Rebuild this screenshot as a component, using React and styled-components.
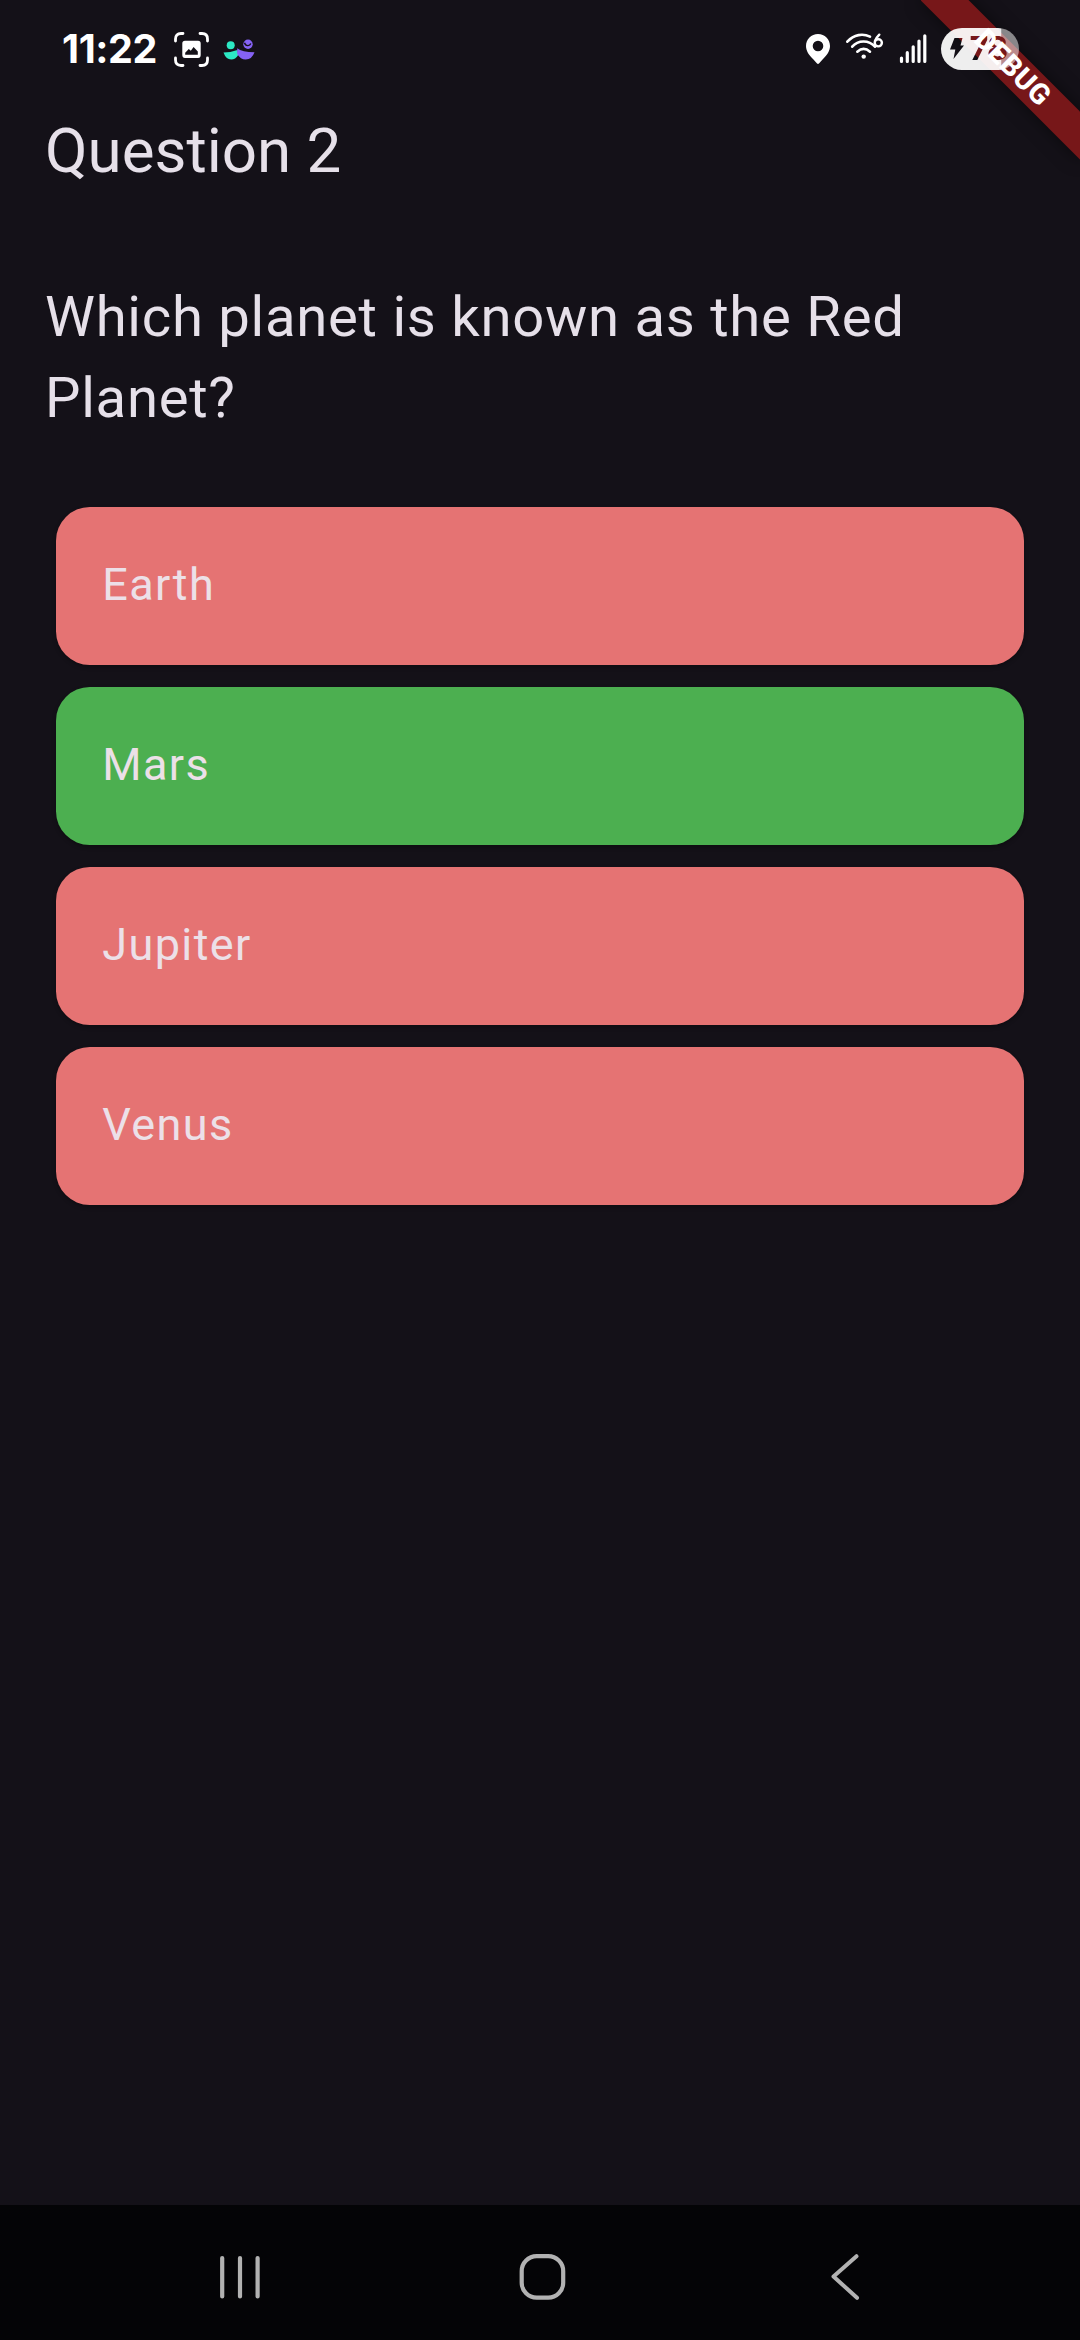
import React from "react";
import styled, { createGlobalStyle } from "styled-components";

const GlobalStyle = createGlobalStyle`
  html, body { margin: 0; padding: 0; background: #141118; }
  * { box-sizing: border-box; }
`;

const Screen = styled.div`
  position: relative;
  display: flex;
  flex-direction: column;
  width: 1080px;
  height: 2340px;
  overflow: hidden;
  background: #141118;
  color: #e6e0e9;
  font-family: Roboto, "Noto Sans", sans-serif;
`;

const StatusBar = styled.header`
  position: relative;
  z-index: 2;
  display: flex;
  justify-content: space-between;
  height: 98px;
  padding: 0 61px 0 62px;
  flex-shrink: 0;
`;

const StatusGroup = styled.div`
  display: flex;
  align-items: center;
  height: 98px;
`;

const Clock = styled.time`
  width: 112px;
  color: #fff;
  font: 700 39.5px/48px Inter, sans-serif;
  letter-spacing: -0.4px;
  white-space: nowrap;
`;

const Glyph = styled.svg`
  display: block;
  flex-shrink: 0;
  overflow: visible;
  margin-left: ${(p) => p.$gap || 0}px;
`;

const BannerClip = styled.div`
  position: absolute;
  z-index: 1;
  top: 0;
  right: 0;
  width: 220px;
  height: 220px;
  overflow: hidden;
`;

const Banner = styled.div`
  position: absolute;
  top: 50.7px;
  left: 40px;
  width: 225px;
  height: 33.75px;
  transform: rotate(45deg);
  background: #771719;
  box-shadow: 0 0 17px rgba(0, 0, 0, 0.5);
  color: #fff;
  font-size: 28.7px;
  font-weight: 800;
  letter-spacing: 0.5px;
  line-height: 33.75px;
  text-align: center;
`;

const AppBar = styled.div`
  display: flex;
  align-items: center;
  height: 106px;
  padding: 0 45px;
  flex-shrink: 0;
`;

const Title = styled.h1`
  margin: 0;
  font-size: 61.875px;
  font-weight: 400;
  line-height: 78px;
`;

const Content = styled.main`
  flex: 1;
  padding: 72.5px 45px 0;
`;

const Question = styled.p`
  margin: 0 0 68.5px;
  font-size: 56.25px;
  line-height: 81px;
  letter-spacing: 0.72px;
`;

const Options = styled.div`
  display: flex;
  flex-direction: column;
  gap: 22.5px;
  padding: 0 11.25px;
`;

const Option = styled.button`
  display: flex;
  align-items: center;
  width: 100%;
  height: 157.5px;
  padding: 0 46px 2.5px;
  border: 0;
  border-radius: 33.75px;
  background: ${(p) => (p.$correct ? "#4caf50" : "#e57373")};
  box-shadow: 0 2px 4px rgba(0, 0, 0, 0.3);
  color: #ece0e8;
  font: 400 45px/67px Roboto, sans-serif;
  letter-spacing: 1.406px;
`;

const NavBar = styled.nav`
  display: flex;
  justify-content: space-between;
  align-items: center;
  height: 135px;
  padding: 9px 211px 0 216px;
  background: #040406;
  flex-shrink: 0;
`;

const options = [
  { label: "Earth" },
  { label: "Mars", correct: true },
  { label: "Jupiter" },
  { label: "Venus" },
];

const CaptureIcon = () => (
  <Glyph width="36" height="34" viewBox="0 0 36 34">
    <path d="M1.5 9V7Q1.5 1.5 7 1.5H9M26 1.5h2Q33.5 1.5 33.5 7v2M33.5 26v2Q33.5 33.5 28 33.5h-2M9 33.5H7Q1.5 33.5 1.5 28v-2" fill="none" stroke="#fff" strokeWidth="2.8" strokeLinecap="round" />
    <path fillRule="evenodd" fill="#fff" d="M11 8.7H24Q26.7 8.7 26.7 11.5V23Q26.7 26 24 26H11Q8.3 26 8.3 23V11.5Q8.3 8.7 11 8.7ZM11.2 22.7H23.8V19.6L19.6 15L16.8 18.8L14.8 17L11.2 20.8Z" />
  </Glyph>
);

const PeopleIcon = () => (
  <Glyph $gap={13} width="32" height="21" viewBox="0 0 32 21">
    <circle cx="7.7" cy="6.2" r="4" fill="#2ce8c4" />
    <path d="M.5 13.5Q7 13.5 14.5 11L15.2 16Q12.5 20.5 8.2 20.5Q3 20.5 .5 13.5Z" fill="#2ce8c4" />
    <circle cx="25" cy="5.3" r="4.7" fill="#8562f4" />
    <path d="M21.5 3.8Q22.4 6.8 25 6.6Q27 6.6 27.8 4.6" fill="none" stroke="#141118" strokeWidth="1.4" />
    <path d="M14.2 9.2Q19 13 31.5 13.3Q29 20.5 22.7 20.5Q17.5 20.5 14.2 15Z" fill="#8562f4" />
  </Glyph>
);

const PinIcon = () => (
  <Glyph width="24" height="31" viewBox="0 0 24 31">
    <path fillRule="evenodd" fill="#fff" d="M12 0C5.2 0 0 5 0 12C0 17 3 21 7 25L10.8 29.2Q12 30.6 13.2 29.2L17 25C21 21 24 17 24 12C24 5 18.8 0 12 0ZM12 6.7a5.3 5.3 0 1 1 0 10.6a5.3 5.3 0 0 1 0-10.6Z" />
  </Glyph>
);

const WifiIcon = () => (
  <Glyph $gap={15} width="38" height="32" viewBox="0 0 38 32">
    <g fill="none" stroke="#fff" strokeWidth="2.6" strokeLinecap="round">
      <path d="M2.3 8.7C9 1.3 18 .3 25 3.7M7.2 13.7C13 6.7 24 6.7 30 13.7M12.3 18.7Q18.7 13 25 18.7" />
    </g>
    <circle cx="18.7" cy="23.6" r="2.2" fill="#fff" />
    <path d="M34.3 1.7Q31 5 30 8" fill="none" stroke="#fff" strokeWidth="2.4" strokeLinecap="round" />
    <circle cx="33.3" cy="9.8" r="3.6" fill="none" stroke="#fff" strokeWidth="2.4" />
  </Glyph>
);

const SignalIcon = () => (
  <Glyph $gap={16} width="28" height="30" viewBox="0 0 28 30">
    <path d="M2.5 24v3.500M8.3 18.700v8.800M14.2 12.800v14.700M20 7v20.500M25.8 1.800v25.700" fill="none" stroke="#fff" strokeWidth="3.2" strokeLinecap="round" />
  </Glyph>
);

const Battery = () => (
  <Glyph $gap={14} width="78" height="42" viewBox="0 0 78 42">
    <defs>
      <mask id="charge">
        <rect width="78" height="42" rx="21" fill="#fff" />
        <path d="M13.5 10h8l-2 7.500h3.500L12.500 31l1.800-9.500H9Z" fill="#000" />
        <text x="28.5" y="32" fontFamily="Inter" fontSize="32.5" fontWeight="700" letterSpacing="-1">78</text>
      </mask>
    </defs>
    <g mask="url(#charge)">
      <rect width="60.5" height="42" fill="#fff" fillOpacity=".93" />
      <rect x="60.5" width="17.5" height="42" fill="#fff" fillOpacity=".5" />
    </g>
  </Glyph>
);

export default function App() {
  return (
    <Screen>
      <GlobalStyle />
      <StatusBar>
        <StatusGroup>
          <Clock>11:22</Clock>
          <CaptureIcon />
          <PeopleIcon />
        </StatusGroup>
        <StatusGroup>
          <PinIcon />
          <WifiIcon />
          <SignalIcon />
          <Battery />
        </StatusGroup>
      </StatusBar>
      <BannerClip>
        <Banner>DEBUG</Banner>
      </BannerClip>
      <AppBar>
        <Title>Question 2</Title>
      </AppBar>
      <Content>
        <Question>Which planet is known as the Red Planet?</Question>
        <Options>
          {options.map((o) => (
            <Option key={o.label} $correct={o.correct}>{o.label}</Option>
          ))}
        </Options>
      </Content>
      <NavBar>
        <Glyph width="48" height="48" viewBox="0 0 48 48">
          <path d="M6.2 5v38.500M24 5v38.500M41.6 5v38.500" stroke="#b2b2b2" strokeWidth="4.2" strokeLinecap="round" />
        </Glyph>
        <Glyph width="48" height="48" viewBox="0 0 48 48">
          <rect x="2.7" y="3.2" width="41.5" height="41.5" rx="15" fill="none" stroke="#b2b2b2" strokeWidth="4.2" />
        </Glyph>
        <Glyph width="48" height="48" viewBox="0 0 48 48">
          <path d="M35.5 3.200L12.500 23.500L36 44.800" fill="none" stroke="#b2b2b2" strokeWidth="4" strokeLinecap="round" strokeLinejoin="round" />
        </Glyph>
      </NavBar>
    </Screen>
  );
}
